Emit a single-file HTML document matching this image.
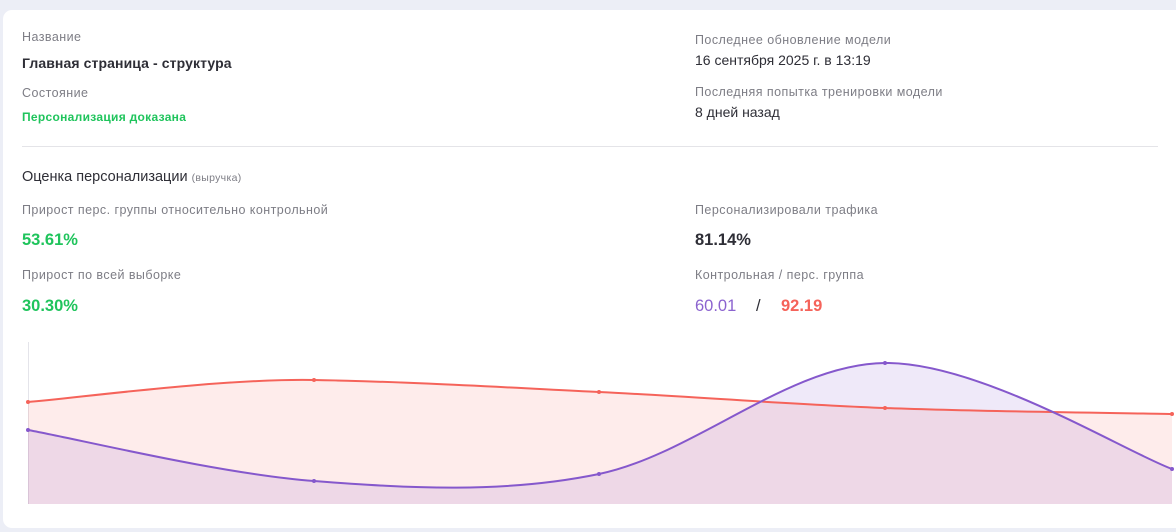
<!DOCTYPE html>
<html><head><meta charset="utf-8"><style>
*{margin:0;padding:0;box-sizing:border-box}
body{width:1176px;height:532px;background:#eceef6;font-family:"Liberation Sans",sans-serif;position:relative;overflow:hidden}
.card{position:absolute;left:3px;top:10px;width:1190px;height:518px;background:#fff;border-radius:9px}
.t{position:absolute;white-space:nowrap}
.l{font-size:12.5px;color:#7d7d85;letter-spacing:0.45px}
.v{font-size:14px;color:#2e2e36;font-weight:bold;letter-spacing:0.1px}
.n{font-size:16.5px;font-weight:bold}
</style></head><body>
<div class="card"></div>
<div class="t l" style="left:22px;top:30px">Название</div>
<div class="t v" style="left:22px;top:55px">Главная страница - структура</div>
<div class="t l" style="left:22px;top:86px">Состояние</div>
<div class="t" style="left:22px;top:110px;font-size:12px;font-weight:bold;color:#1fc45c;letter-spacing:0.3px">Персонализация доказана</div>
<div class="t l" style="left:695px;top:33px">Последнее обновление модели</div>
<div class="t" style="left:695px;top:52px;font-size:14px;color:#2e2e36">16 сентября 2025 г. в 13:19</div>
<div class="t l" style="left:695px;top:85px">Последняя попытка тренировки модели</div>
<div class="t" style="left:695px;top:104px;font-size:14px;color:#2e2e36">8 дней назад</div>
<div style="position:absolute;left:22px;top:146px;width:1136px;height:1px;background:#e4e4e8"></div>
<div class="t" style="left:22px;top:169px;font-size:14.5px;color:#2e2e36">Оценка персонализации <span style="font-size:10.5px;color:#7d7d85;letter-spacing:0.3px">(выручка)</span></div>
<div class="t l" style="left:22px;top:203px">Прирост перс. группы относительно контрольной</div>
<div class="t n" style="left:22px;top:231px;color:#1fc45c">53.61%</div>
<div class="t l" style="left:22px;top:268px">Прирост по всей выборке</div>
<div class="t n" style="left:22px;top:297px;color:#1fc45c">30.30%</div>
<div class="t l" style="left:695px;top:203px">Персонализировали трафика</div>
<div class="t n" style="left:695px;top:231px;color:#2e2e36">81.14%</div>
<div class="t l" style="left:695px;top:268px">Контрольная / перс. группа</div>
<div class="t" style="left:695px;top:297px;font-size:16.5px;color:#8b63cf">60.01</div>
<div class="t" style="left:756px;top:297px;font-size:16.5px;color:#2e2e36">/</div>
<div class="t" style="left:781px;top:297px;font-size:16.5px;font-weight:bold;color:#f5635a">92.19</div>
<svg style="position:absolute;left:0;top:0" width="1176" height="532">
<line x1="28.5" y1="342" x2="28.5" y2="504" stroke="#e4e4ea"/>
<path d="M28,402 C75.7,398.3 218.8,378.3 314,380 C409.2,381.7 503.8,387.3 599,392 C694.2,396.7 789.5,404.3 885,408 C980.5,411.7 1124.2,413 1172,414 L1172,504 L28,504Z" fill="rgba(250,110,100,0.13)"/>
<path d="M28,430 C75.7,438.5 218.8,473.7 314,481 C409.2,488.3 503.8,493.7 599,474 C694.2,454.3 789.5,363.8 885,363 C980.5,362.2 1124.2,451.3 1172,469 L1172,504 L28,504Z" fill="rgba(140,100,210,0.14)"/>
<path d="M28,402 C75.7,398.3 218.8,378.3 314,380 C409.2,381.7 503.8,387.3 599,392 C694.2,396.7 789.5,404.3 885,408 C980.5,411.7 1124.2,413 1172,414" fill="none" stroke="#f5635a" stroke-width="2"/>
<path d="M28,430 C75.7,438.5 218.8,473.7 314,481 C409.2,488.3 503.8,493.7 599,474 C694.2,454.3 789.5,363.8 885,363 C980.5,362.2 1124.2,451.3 1172,469" fill="none" stroke="#8558cc" stroke-width="2"/>
<g fill="#f5635a"><circle cx="28" cy="402" r="2"/><circle cx="314" cy="380" r="2"/><circle cx="599" cy="392" r="2"/><circle cx="885" cy="408" r="2"/><circle cx="1172" cy="414" r="2"/></g>
<g fill="#8558cc"><circle cx="28" cy="430" r="2"/><circle cx="314" cy="481" r="2"/><circle cx="599" cy="474" r="2"/><circle cx="885" cy="363" r="2"/><circle cx="1172" cy="469" r="2"/></g>
</svg>
</body></html>
